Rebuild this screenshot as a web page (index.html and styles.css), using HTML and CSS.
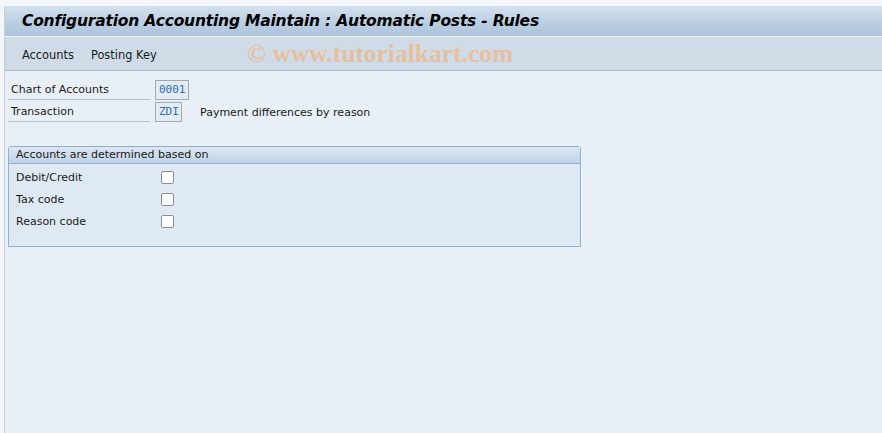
FILE: index.html
```html
<!DOCTYPE html>
<html lang="en">
<head>
  <meta charset="UTF-8">
  <title>Configuration Accounting Maintain : Automatic Posts - Rules</title>
  <link rel="stylesheet" href="styles.css">
</head>
<body>
  <div class="window">
    <header class="titlebar">
      <h1>Configuration Accounting Maintain : Automatic Posts - Rules</h1>
    </header>
    <nav class="toolbar">
      <a href="#">Accounts</a>
      <a href="#">Posting Key</a>
      <span class="watermark">&copy; www.tutorialkart.com</span>
    </nav>
    <main class="content">
      <div class="field-row">
        <label class="field-label">Chart of Accounts</label>
        <span class="field-input w4">0001</span>
      </div>
      <div class="field-row">
        <label class="field-label">Transaction</label>
        <span class="field-input w3">ZDI</span>
        <span class="field-text">Payment differences by reason</span>
      </div>

      <section class="group">
        <div class="group-title">Accounts are determined based on</div>
        <div class="group-body">
          <div class="check-row"><span class="check-label">Debit/Credit</span><span class="checkbox"></span></div>
          <div class="check-row"><span class="check-label">Tax code</span><span class="checkbox"></span></div>
          <div class="check-row"><span class="check-label">Reason code</span><span class="checkbox"></span></div>
        </div>
      </section>
    </main>
  </div>
</body>
</html>
```

FILE: styles.css
```css
html, body {
  margin: 0;
  padding: 0;
  height: 100%;
}
body {
  font-family: Tahoma, "DejaVu Sans", sans-serif;
  font-size: 11px;
  color: #1a1a1a;
  background: #f3f6fa;
}
.window {
  margin: 6px 0 0 4px;
  height: calc(100% - 6px);
  border-left: 1px solid #c4cfdb;
  background: #e9eff7;
  display: flex;
  flex-direction: column;
}
.titlebar {
  height: 30px;
  background: linear-gradient(180deg, #d3e1ee 0%, #bccfe3 55%, #adc4dc 100%);
  border-bottom: 1px solid #f4f7fa;
  display: flex;
  align-items: center;
  padding-left: 17px;
}
.titlebar h1 {
  margin: 0 0 1px 0;
  font-family: "DejaVu Sans", sans-serif;
  font-size: 15.5px;
  font-weight: bold;
  font-style: italic;
  letter-spacing: -0.2px;
  color: #000;
}
.toolbar {
  height: 33px;
  background: #cfdce8;
  border-bottom: 1px solid #a9b8c8;
  display: flex;
  align-items: center;
  padding-left: 17px;
  position: relative;
}
.toolbar a {
  color: #1a1a1a;
  text-decoration: none;
  font-size: 11.4px;
  margin-right: 17px;
  padding-top: 2px;
}
.watermark {
  position: absolute;
  left: 242px;
  top: 2px;
  font-family: "Liberation Serif", serif;
  font-size: 25.5px;
  font-weight: bold;
  color: #ebbb92;
  opacity: 0.85;
}
.content {
  flex: 1;
  padding: 8px 0 0 3px;
}
.field-row {
  display: flex;
  align-items: center;
  height: 22px;
}
.field-label {
  width: 142px;
  height: 20px;
  padding-left: 3px;
  border-bottom: 1px solid #b8c2cc;
  box-sizing: border-box;
  line-height: 20px;
  margin-right: 5px;
}
.field-input {
  height: 20px;
  box-sizing: border-box;
  border: 1px solid #a3a9b0;
  background: #e4ebf2;
  font-family: "DejaVu Sans Mono", monospace;
  font-size: 11px;
  color: #1f6fb4;
  line-height: 18px;
  padding-left: 3px;
}
.w4 { width: 34px; }
.w3 { width: 27px; }
.field-text {
  margin-left: 18px;
}
.group {
  width: 571px;
  margin-top: 23px;
  border: 1px solid #8fb0d2;
  border-radius: 3px 3px 0 0;
  background: #dfe9f4;
}
.group-title {
  height: 16px;
  line-height: 15px;
  padding-left: 7px;
  background: linear-gradient(180deg, #dbe6f1 0%, #c1d4e7 100%);
  border-bottom: 1px solid #8fb0d2;
}
.group-body {
  padding: 2px 0 14px 7px;
}
.check-row {
  display: flex;
  align-items: center;
  height: 22px;
}
.check-label {
  width: 145px;
}
.checkbox {
  width: 11px;
  height: 11px;
  border: 1px solid #8a8f96;
  border-radius: 2px;
  background: #fff;
}
```
